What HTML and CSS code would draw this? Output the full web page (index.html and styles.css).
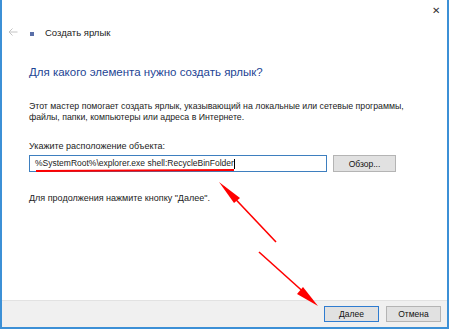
FILE: index.html
```html
<!DOCTYPE html>
<html lang="ru">
<head>
    <meta charset="UTF-8">
    <title>Создать ярлык</title>
    <link rel="stylesheet" href="styles.css">
</head>
<body>
    <div class="window">
        <div class="titlebar">
            <span class="close">&#x2715;</span>
        </div>
        <div class="nav">
            <svg class="back" width="10" height="8" viewBox="0 0 10 8">
                <path d="M9.5 4H1M4.5 0.5L1 4l3.5 3.5" fill="none" stroke="#c4c4c4" stroke-width="1"/>
            </svg>
            <span class="app-icon"></span>
            <span class="nav-title">Создать ярлык</span>
        </div>

        <div class="content">
            <h1>Для какого элемента нужно создать ярлык?</h1>
            <p class="intro">Этот мастер помогает создать ярлык, указывающий на локальные или сетевые программы, файлы, папки, компьютеры или адреса в Интернете.</p>
            <div class="label">Укажите расположение объекта:</div>
            <div class="path-row">
                <div class="path-input">%SystemRoot%\explorer.exe shell:RecycleBinFolder<span class="caret"></span></div>
                <button class="btn browse">Обзор...</button>
            </div>
            <p class="hint">Для продолжения нажмите кнопку "Далее".</p>
        </div>

        <div class="footer">
            <button class="btn primary">Далее</button>
            <button class="btn">Отмена</button>
        </div>

        <!-- red marks drawn over the screenshot -->
        <svg class="marks" width="450" height="329" viewBox="0 0 450 329">
            <path d="M34 171 L232 170" stroke="#f00" stroke-width="2" fill="none"/>
            <line x1="222" y1="187" x2="274" y2="242" stroke="#f00" stroke-width="1.6"/>
            <polygon points="217,182 238,198 232,203" fill="#f00"/>
            <line x1="257" y1="252" x2="306" y2="296" stroke="#f00" stroke-width="1.6"/>
            <polygon points="316,306 295,294 301,287" fill="#f00"/>
        </svg>
    </div>
</body>
</html>
```

FILE: styles.css
```css
body {
    margin: 0;
    background-color: #ffffff;
    font-family: 'Liberation Sans', Arial, sans-serif;
    color: #1b1b1b;
}

.window {
    position: relative;
    width: 449px;
    height: 329px;
    box-sizing: border-box;
    border: 2px solid #3c90d6;
    border-top: none;
    display: flex;
    flex-direction: column;
    background-color: #ffffff;
}

.titlebar {
    height: 20px;
    display: flex;
    justify-content: flex-end;
    align-items: center;
    padding-right: 5px;
}

.close {
    font-size: 10px;
    color: #333333;
    width: 12px;
    text-align: center;
}

.nav {
    display: flex;
    align-items: center;
    height: 24px;
    padding-left: 6px;
}

.back {
    margin-right: 12px;
}

.app-icon {
    width: 4px;
    height: 4px;
    background-color: #5a6fa8;
    margin-right: 11px;
    margin-top: 3px;
}

.nav-title {
    font-size: 9.5px;
}

.content {
    padding: 0 27px;
}

h1 {
    margin: 20px 0 0;
    font-size: 11.5px;
    font-weight: normal;
    color: #1d4494;
    line-height: 16px;
}

.intro {
    margin: 21px 0 0;
    font-size: 8.75px;
    line-height: 11px;
    max-width: 390px;
}

.label {
    margin-top: 18px;
    font-size: 9px;
    line-height: 11px;
}

.path-row {
    display: flex;
    align-items: center;
    margin-top: 3px;
}

.path-input {
    width: 291px;
    height: 15px;
    border: 1px solid #3e7fbf;
    font-size: 8.5px;
    line-height: 15px;
    padding-left: 5px;
    box-sizing: content-box;
    display: flex;
    align-items: center;
}

.caret {
    width: 1px;
    height: 10px;
    background-color: #000000;
}

.btn {
    font-family: 'Liberation Sans', Arial, sans-serif;
    font-size: 8.5px;
    color: #111111;
    background-color: #e1e1e1;
    border: 1px solid #b4b4b4;
    padding: 0;
    width: 55px;
    height: 16px;
}

.browse {
    width: 63px;
    height: 17px;
    margin-left: 6px;
}

.hint {
    margin: 21px 0 0;
    font-size: 9px;
    line-height: 11px;
}

.footer {
    margin-top: auto;
    height: 26px;
    background-color: #f0f0f0;
    border-top: 1px solid #e2e2e2;
    display: flex;
    justify-content: flex-end;
    align-items: center;
    gap: 7px;
    padding-right: 6px;
}

.primary {
    border-color: #2f7cd0;
}

.marks {
    position: absolute;
    left: 0;
    top: 0;
    pointer-events: none;
}
```
